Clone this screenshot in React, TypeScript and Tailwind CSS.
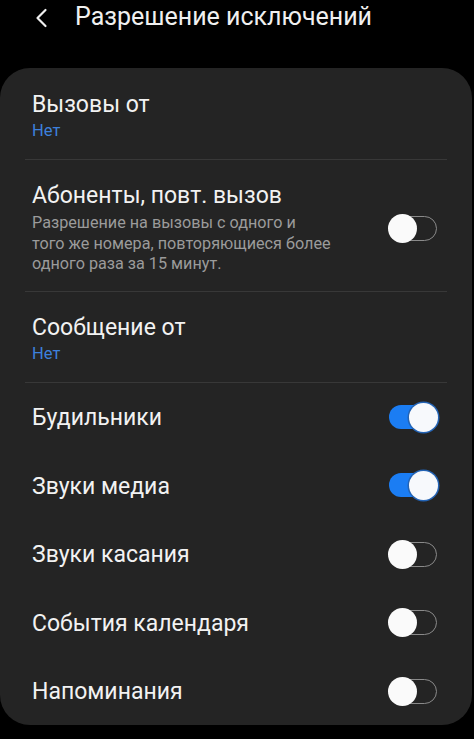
import React from "react";

function Toggle({ on }: { on: boolean }) {
  return (
    <div className="relative w-[50px] h-[30px] shrink-0">
      {on ? (
        <div className="absolute left-[1px] top-[3px] h-[24px] w-[46px] rounded-full bg-[#1b7df3]" />
      ) : (
        <div className="absolute right-[1px] top-[3px] h-[25px] w-[47px] rounded-full border-[1.5px] border-[#8a8a8a]" />
      )}
      <div
        className={
          on
            ? "absolute right-0 top-[1px] h-[29px] w-[29px] rounded-full bg-[#f7f9fc] shadow-[0_0_0_1.5px_#2363b4]"
            : "absolute left-0 top-[1px] h-[29px] w-[29px] rounded-full bg-[#fafafa]"
        }
      />
    </div>
  );
}

function Divider() {
  return <div className="h-px bg-[#383838]" />;
}

function SimpleRow({ label, on }: { label: string; on: boolean }) {
  return (
    <div className="flex h-[68.5px] items-center justify-between pl-[7px] pr-[9px]">
      <span className="pt-[3px] text-[23px] text-[#f2f2f2] leading-[28px]">{label}</span>
      <Toggle on={on} />
    </div>
  );
}

export default function App() {
  return (
    <div
      className="w-[474px] h-[739px] bg-black overflow-hidden"
      style={{ fontFamily: "Roboto, 'Noto Sans', sans-serif" }}
    >
      <div className="h-[68px] flex items-start pt-[3px]">
        <svg
          className="ml-[35px] mt-[5px]"
          width="13"
          height="20"
          viewBox="0 0 13 20"
          fill="none"
          stroke="#f0f0f0"
          strokeWidth="2.2"
          strokeLinecap="round"
          strokeLinejoin="round"
        >
          <path d="M10.5 2 L2.5 10 L10.5 18" />
        </svg>
        <span className="ml-[27px] text-[25px] leading-[28px] text-[#f0f0f0]">
          Разрешение исключений
        </span>
      </div>

      <div className="mr-[2px] rounded-[30px] bg-[#242424] px-[25px]">
        <div className="pt-[23px] pb-[18px] pl-[7px]">
          <div className="text-[23px] leading-[28px] text-[#f2f2f2]">Вызовы от</div>
          <div className="mt-[2px] text-[16.5px] leading-[20px] text-[#3d80dc]">Нет</div>
        </div>
        <Divider />
        <div className="flex items-center justify-between pt-[22px] pb-[16px] pl-[7px] pr-[9px]">
          <div>
            <div className="text-[23px] leading-[28px] text-[#f2f2f2]">Абоненты, повт. вызов</div>
            <div className="mt-[3px] text-[16.2px] leading-[20.5px] text-[#9b9b9b] whitespace-nowrap">
              Разрешение на вызовы с одного и
              <br />
              того же номера, повторяющиеся более
              <br />
              одного раза за 15 минут.
            </div>
          </div>
          <Toggle on={false} />
        </div>
        <Divider />
        <div className="pt-[22px] pb-[18px] pl-[7px]">
          <div className="text-[23px] leading-[28px] text-[#f2f2f2]">Сообщение от</div>
          <div className="mt-[2px] text-[16.5px] leading-[20px] text-[#3d80dc]">Нет</div>
        </div>
        <Divider />
        <SimpleRow label="Будильники" on={true} />
        <SimpleRow label="Звуки медиа" on={true} />
        <SimpleRow label="Звуки касания" on={false} />
        <SimpleRow label="События календаря" on={false} />
        <SimpleRow label="Напоминания" on={false} />
      </div>
    </div>
  );
}
